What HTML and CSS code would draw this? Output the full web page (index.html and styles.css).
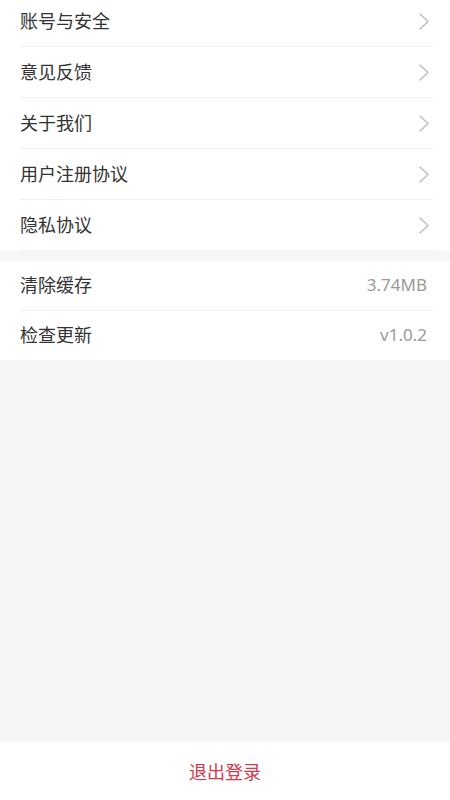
FILE: index.html
```html
<!DOCTYPE html>
<html lang="zh-CN">
<head>
<meta charset="utf-8">
<title>设置</title>
<link rel="stylesheet" href="styles.css">
</head>
<body>
<div class="page">
  <section class="group group-first">
    <div class="row"><span class="label">账号与安全</span><svg class="chev" viewBox="0 0 10 17" width="10" height="17"><polyline points="1,1 9,8.5 1,16"/></svg></div>
    <div class="row"><span class="label">意见反馈</span><svg class="chev" viewBox="0 0 10 17" width="10" height="17"><polyline points="1,1 9,8.5 1,16"/></svg></div>
    <div class="row"><span class="label">关于我们</span><svg class="chev" viewBox="0 0 10 17" width="10" height="17"><polyline points="1,1 9,8.5 1,16"/></svg></div>
    <div class="row"><span class="label">用户注册协议</span><svg class="chev" viewBox="0 0 10 17" width="10" height="17"><polyline points="1,1 9,8.5 1,16"/></svg></div>
    <div class="row"><span class="label">隐私协议</span><svg class="chev" viewBox="0 0 10 17" width="10" height="17"><polyline points="1,1 9,8.5 1,16"/></svg></div>
  </section>
  <section class="group group-second">
    <div class="row"><span class="label">清除缓存</span><span class="value">3.74MB</span></div>
    <div class="row row-last"><span class="label">检查更新</span><span class="value">v1.0.2</span></div>
  </section>
  <div class="spacer"></div>
  <footer class="footer"><span class="logout">退出登录</span></footer>
</div>
</body>
</html>
```

FILE: styles.css
```css
html, body {
  margin: 0;
  padding: 0;
}
body {
  background: #f6f6f6;
  font-family: "Noto Sans CJK SC", "Noto Sans", sans-serif;
  color: #333;
}
.page {
  height: 800px;
  display: flex;
  flex-direction: column;
  overflow: hidden;
}
.group {
  background: #fff;
  display: flex;
  flex-direction: column;
}
.group-first {
  margin-top: -4px;
}
.group-second {
  margin-top: 10px;
}
.row {
  height: 50px;
  margin: 0 17px 0 20px;
  border-bottom: 1px solid #efefef;
  display: flex;
  align-items: center;
  justify-content: space-between;
}
.group-second .row {
  height: 49px;
}
.row-last {
  border-bottom: 0;
}
.label {
  font-size: 18px;
  line-height: 1;
  color: #333;
  margin-bottom: 3px;
}
.chev {
  margin-right: 4px;
  fill: none;
  stroke: #bdbdbd;
  stroke-width: 1.4;
  stroke-linecap: round;
  stroke-linejoin: round;
}
.value {
  margin-right: 6px;
  margin-bottom: 3px;
  font-family: "Noto Sans", sans-serif;
  font-size: 17px;
  color: #9a9a9a;
}
.spacer {
  flex: 1;
}
.footer {
  height: 58px;
  background: #fff;
  display: flex;
  align-items: center;
  justify-content: center;
}
.logout {
  font-size: 18px;
  color: #d23a4d;
}
```
